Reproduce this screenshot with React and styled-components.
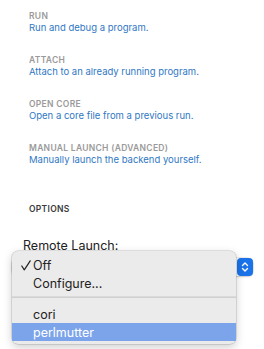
import React from 'react';
import styled, { createGlobalStyle } from 'styled-components';

const Global = createGlobalStyle`
  html, body { margin: 0; padding: 0; background: #fff; }
  body { font-family: Inter, "Liberation Sans", sans-serif; -webkit-font-smoothing: antialiased; }
`;

const Page = styled.div`
  width: 264px;
  height: 349px;
  position: relative;
  overflow: hidden;
  padding-top: 11px;
  box-sizing: border-box;
`;

const Section = styled.div`
  padding-left: 29px;
  margin-bottom: ${p => p.gap || 23}px;
`;

const Title = styled.div`
  font-size: 8.5px;
  font-weight: 600;
  letter-spacing: 0.3px;
  color: ${p => p.dark ? '#3a3a3a' : '#9a9a9a'};
  line-height: 11px;
`;

const Desc = styled.div`
  font-size: 9.5px;
  color: #2f78c4;
  line-height: 12px;
`;

const Field = styled.div`
  padding-left: 23px;
  margin-top: 10px;
  position: relative;
`;

const Label = styled.div`
  font-size: 12.5px;
  color: #222;
  line-height: 15px;
`;

const SelectBox = styled.div`
  margin-top: 5px;
  margin-left: -11px;
  width: 241px;
  height: 18px;
  border-radius: 5px;
  background: #fff;
  box-shadow: 0 0 0 0.5px rgba(0,0,0,0.15), 0 1px 2px rgba(0,0,0,0.15);
  display: flex;
  justify-content: flex-end;
`;

const Stepper = styled.div`
  width: 16px;
  height: 18px;
  border-radius: 4px;
  background: #1a73e8;
  display: flex;
  align-items: center;
  justify-content: center;
`;

const Menu = styled.div`
  position: absolute;
  left: 12px;
  top: 13px;
  width: 224px;
  padding: 5px 0 3px;
  border-radius: 6px;
  background: #ebebeb;
  box-shadow: 0 0 0 0.5px rgba(0,0,0,0.2), 0 3px 10px rgba(0,0,0,0.2);
`;

const Item = styled.div`
  display: flex;
  align-items: center;
  height: 18px;
  padding-left: 9px;
  font-size: 12.5px;
  color: ${p => p.active ? '#fff' : '#222'};
  background: ${p => p.active ? '#7ca4ea' : 'transparent'};
`;

const Check = styled.span`
  width: 12px;
  display: inline-flex;
  align-items: center;
`;

const Sep = styled.div`
  height: 1px;
  background: #d0d0d0;
  margin: 4px 0 7px;
  border-top: 1px solid #dadada;
`;

const sections = [
  { title: 'RUN', desc: 'Run and debug a program.' },
  { title: 'ATTACH', desc: 'Attach to an already running program.' },
  { title: 'OPEN CORE', desc: 'Open a core file from a previous run.' },
  { title: 'MANUAL LAUNCH (ADVANCED)', desc: 'Manually launch the backend yourself.' },
];

export default function App() {
  return (
    <Page>
      <Global />
      {sections.map((s, i) => (
        <Section key={s.title} gap={i === 3 ? 38 : 21}>
          <Title>{s.title}</Title>
          <Desc>{s.desc}</Desc>
        </Section>
      ))}
      <Section gap={0}>
        <Title dark>OPTIONS</Title>
      </Section>
      <Field>
        <Label>Remote Launch:</Label>
        <SelectBox>
          <Stepper>
            <svg width="8" height="12" viewBox="0 0 8 12">
              <path d="M1.5 4.5 L4 2 L6.5 4.5 M1.5 7.5 L4 10 L6.5 7.5" fill="none" stroke="#fff" strokeWidth="1.4" strokeLinecap="round" strokeLinejoin="round" />
            </svg>
          </Stepper>
        </SelectBox>
        <Menu>
          <Item>
            <Check>
              <svg width="10" height="11" viewBox="0 0 10 11">
                <path d="M0.8 6 L3.3 9.8 L9.2 0.8" fill="none" stroke="#222" strokeWidth="1.2" strokeLinecap="round" strokeLinejoin="round" />
              </svg>
            </Check>
            Off
          </Item>
          <Item><Check />Configure...</Item>
          <Sep />
          <Item><Check />cori</Item>
          <Item active><Check />perlmutter</Item>
        </Menu>
      </Field>
    </Page>
  );
}
